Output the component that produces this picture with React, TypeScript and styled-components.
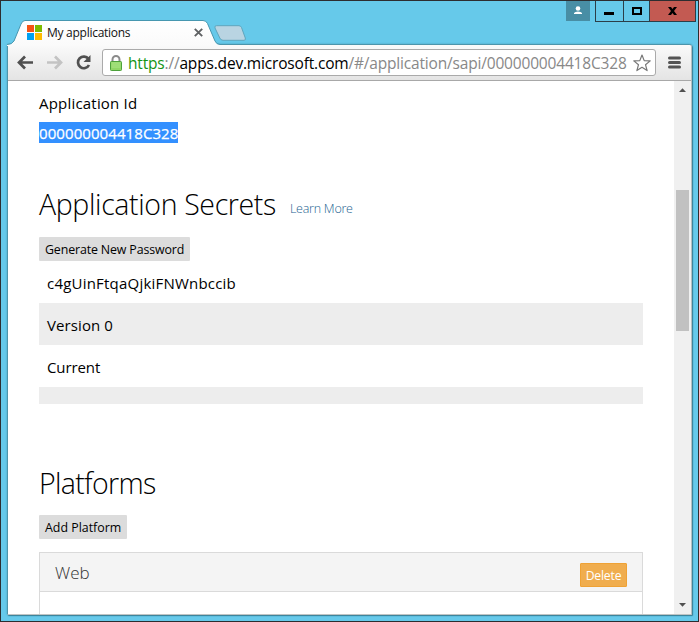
import React from "react";
import styled, { createGlobalStyle } from "styled-components";

const GlobalStyle = createGlobalStyle`
  * { box-sizing: border-box; }
  html, body { margin: 0; padding: 0; overflow: hidden; }
  body { font-family: "Open Sans", "Noto Sans", sans-serif; color: #000; }
  button { font-family: inherit; margin: 0; }
`;

const DesktopWindow = styled.div`
  width: 699px;
  height: 622px;
  display: flex;
  flex-direction: column;
  background: #66c9ea;
  border: 1px solid #2d2d30;
  padding: 0 6px 6px;
  overflow: hidden;
`;

const TitleBar = styled.header`
  height: 43px;
  flex: none;
  display: flex;
  align-items: flex-start;
  justify-content: space-between;
`;

const TabStrip = styled.div`
  display: flex;
  align-items: flex-start;
  padding-top: 19px;
`;

const Tab = styled.div`
  position: relative;
  width: 211px;
  height: 26px;
  display: flex;
  align-items: center;
  padding: 0 15px 1px 20px;
  z-index: 1;
`;

const TabShape = styled.svg`
  position: absolute;
  left: 0;
  top: 0;
  z-index: -1;
`;

const TabTitle = styled.span`
  flex: 1;
  margin-left: 5px;
  font-size: 12px;
  line-height: 16px;
  letter-spacing: -0.27px;
  color: #111;
  white-space: nowrap;
`;

const NewTab = styled.svg`
  margin-top: 5px;
  margin-left: -5px;
`;

const Controls = styled.div`
  display: flex;
`;

const UserBadge = styled.div`
  width: 24px;
  height: 20px;
  background: #488ea5;
  margin-right: 5px;
  display: flex;
  justify-content: center;
`;

const ControlGroup = styled.div`
  display: flex;
  height: 21px;
  margin-right: -4px;
  border: 1px solid #2b3e48;
  border-top: 0;
`;

const ControlButton = styled.div<{ $width: number; $close?: boolean }>`
  width: ${(p) => p.$width}px;
  background: ${(p) => (p.$close ? "#c35a52" : "#66c9ea")};
  & + & { border-left: 1px solid #2b3e48; }
`;

const Browser = styled.main`
  flex: 1;
  min-height: 0;
  display: flex;
  flex-direction: column;
  background: #fff;
  border: 1px solid #4d95ab;
  border-right-color: #b5bfc1;
  border-bottom-color: #bfc4c4;
  border-radius: 3px 3px 1px 1px;
  box-shadow: 1px 1px 1px #397f95, 0 0 2px #4798b2;
`;

const Toolbar = styled.div`
  height: 36px;
  flex: none;
  display: flex;
  align-items: center;
  border-bottom: 1px solid #a8a8a8;
  background: linear-gradient(#fafafa, #e4e4e4);
  border-radius: 2px 2px 0 0;
`;

const NavIcons = styled.svg`
  margin-left: 8px;
  flex: none;
`;

const AddressBar = styled.div`
  width: 554px;
  height: 27px;
  margin-left: 1px;
  display: flex;
  align-items: center;
  background: #fff;
  border: 1px solid #aaa;
  border-radius: 3px;
  padding: 0 4px 0 7px;
`;

const Url = styled.span`
  flex: 1;
  margin-left: 5px;
  font-size: 15.5px;
  line-height: 24px;
  letter-spacing: -0.18px;
  color: #888;
  white-space: nowrap;
`;
const Scheme = styled.span` color: #149414; `;
const Host = styled.span` color: #000; `;

const MenuIcon = styled.svg`
  margin-left: 12px;
`;

const Viewport = styled.div`
  flex: 1;
  min-height: 0;
  display: flex;
  overflow: hidden;
`;

const Page = styled.div`
  flex: 1;
  padding: 11px 31px 0;
  overflow: hidden;
`;

const FieldLabel = styled.div`
  height: 30px;
  font-size: 15px;
  line-height: 22px;
  letter-spacing: 0.2px;
`;

const AppId = styled.div`
  width: 139px;
  height: 21px;
  background: #3390ff;
  color: #fff;
  font-size: 15px;
  line-height: 22px;
  letter-spacing: 0.08px;
  -webkit-text-stroke: 0.25px #fff;
  white-space: nowrap;
`;

const SectionHead = styled.div<{ $top: number; $height: number }>`
  display: flex;
  align-items: flex-start;
  margin-top: ${(p) => p.$top}px;
  height: ${(p) => p.$height}px;
`;

const Heading = styled.h2<{ $spacing: number }>`
  margin: 0;
  font-size: 28.5px;
  line-height: 38px;
  font-weight: 300;
  letter-spacing: ${(p) => p.$spacing}px;
  white-space: nowrap;
`;

const LearnMore = styled.a`
  margin-left: 14px;
  margin-top: 15px;
  font-size: 12.5px;
  line-height: 18px;
  font-weight: 300;
  letter-spacing: -0.25px;
  color: #245f91;
  white-space: nowrap;
`;

const ActionButton = styled.button<{ $width: number; $spacing?: number }>`
  display: block;
  width: ${(p) => p.$width}px;
  height: 24px;
  margin-top: 10px;
  padding: 1px 0 0 6px;
  text-align: left;
  border: 0;
  border-radius: 1px;
  background: #dcdcdc;
  color: #000;
  font-size: 12.4px;
  line-height: 24px;
  letter-spacing: ${(p) => p.$spacing ?? 0}px;
  white-space: nowrap;
`;

const SecretRow = styled.div<{ $shaded?: boolean; $height?: number; $spacing?: number }>`
  height: ${(p) => p.$height ?? 42}px;
  padding-left: 8px;
  background: ${(p) => (p.$shaded ? "#ededed" : "#fff")};
  font-size: 15px;
  line-height: 45px;
  letter-spacing: ${(p) => p.$spacing ?? 0}px;
`;

const PlatformCard = styled.section`
  margin-top: 13px;
  height: 90px;
  border: 1px solid #dadada;
`;

const PlatformHead = styled.div`
  height: 39px;
  display: flex;
  align-items: center;
  justify-content: space-between;
  padding: 5px 15px 0;
  background: #f4f4f4;
  border-bottom: 1px solid #dadada;
`;

const PlatformName = styled.span`
  margin-top: -5px;
  font-size: 17px;
  font-weight: 300;
  color: #333;
`;

const DeleteButton = styled.button`
  width: 47px;
  height: 24px;
  padding: 0;
  border: 1px solid #efa235;
  border-radius: 1px;
  background: #f0ad4e;
  color: #fff;
  font-size: 12.2px;
  line-height: 23px;
  letter-spacing: -0.2px;
`;

const ScrollTrack = styled.div`
  width: 17px;
  flex: none;
  display: flex;
  flex-direction: column;
  align-items: center;
  background: #f0f0f0;
`;

const ScrollThumb = styled.div`
  width: 13px;
  height: 141px;
  margin: 92px 2px auto;
  background: #c1c1c1;
`;

export default function App() {
  return (
    <>
      <GlobalStyle />
      <DesktopWindow>
        <TitleBar>
          <TabStrip>
            <Tab>
              <TabShape width="214" height="26" viewBox="0 0 214 26">
                <defs>
                  <linearGradient id="tab" x1="0" y1="0" x2="0" y2="1">
                    <stop offset="0" stopColor="#fff" />
                    <stop offset="1" stopColor="#fafafa" />
                  </linearGradient>
                </defs>
                <path
                  d="M0 26V24.5Q5 24.500 7 21L14 4Q15.500.5 18 .5H196Q199 .5 200.500 3.500L208 21Q209.500 24.500 213 24.500V26Z"
                  fill="url(#tab)"
                />
                <path
                  d="M0 24.500Q5 24.500 7 21L14 4Q15.500.5 18 .5H196Q199 .5 200.500 3.500L208 21Q209.500 24.500 213 24.500"
                  fill="none"
                  stroke="#4797b0"
                />
              </TabShape>
              <svg width="15" height="15" viewBox="0 0 15 15">
                <path fill="#f65314" d="M0 0h7v7H0z" />
                <path fill="#7cbb00" d="M8 0h7v7H8z" />
                <path fill="#00a1f1" d="M0 8h7v7H0z" />
                <path fill="#ffbb00" d="M8 8h7v7H8z" />
              </svg>
              <TabTitle>My applications</TabTitle>
              <svg width="9" height="9" viewBox="0 0 9 9">
                <path d="M.8.8l7.400 7.400M8.200.8L.8 8.200" stroke="#5f6163" strokeWidth="1.900" />
              </svg>
            </Tab>
            <NewTab width="34" height="17" viewBox="0 0 34 17">
              <path
                d="M3.500.7H26Q27.700.7 28.500 2.500L32.300 13Q33 15.300 31 15.300H10Q7.700 15.300 6.800 13L2 3Q1.200.7 3.500.7Z"
                fill="#b9d4e2"
                stroke="#5fa5bd"
              />
            </NewTab>
          </TabStrip>
          <Controls>
            <UserBadge>
              <svg width="24" height="20" viewBox="0 0 24 20">
                <circle cx="12" cy="7.500" r="2.300" fill="#fff" />
                <path d="M8 13v-1q1-1.500 4-1.500t4 1.500v1z" fill="#fff" />
              </svg>
            </UserBadge>
            <ControlGroup>
              <ControlButton $width={27}>
                <svg width="27" height="20" viewBox="0 0 27 20">
                  <path d="M8 11h10v3H8z" />
                </svg>
              </ControlButton>
              <ControlButton $width={26}>
                <svg width="25" height="20" viewBox="0 0 25 20">
                  <path d="M9 7h8v6H9z" fill="none" stroke="#000" strokeWidth="2" />
                </svg>
              </ControlButton>
              <ControlButton $width={46} $close>
                <svg width="45" height="20" viewBox="0 0 45 20">
                  <path d="M18 6h3l1.500 2L24 6h3l-3 4 3 4h-3l-1.500-2L21 14h-3l3-4z" />
                </svg>
              </ControlButton>
            </ControlGroup>
          </Controls>
        </TitleBar>
        <Browser>
          <Toolbar>
            <NavIcons width="85" height="24" viewBox="0 0 85 24">
              <g fill="none" strokeWidth="2.700">
                <path d="M17 11.500H3.500M9 5.500l-6 6 6 6" stroke="#505050" />
                <path d="M31 11.500h13.500M39 5.500l6 6-6 6" stroke="#c3c3c3" />
                <path d="M72.500 8A5.800 5.800 0 1 0 73 14" stroke="#505050" />
              </g>
              <path d="M74.500 4v7h-7z" fill="#505050" />
            </NavIcons>
            <AddressBar>
              <svg width="13" height="16" viewBox="0 0 13 16">
                <path d="M2.500 8V4.500a3.500 3.500 0 0 1 7 0V8" fill="none" stroke="#8b8b8b" strokeWidth="2" />
                <rect x=".5" y="6.500" width="11" height="9" rx=".8" fill="#91d766" stroke="#4da13b" />
                <path d="M1.500 8h9M1.500 10h9M1.500 12h9" stroke="#b9ed99" strokeWidth=".7" />
              </svg>
              <Url>
                <Scheme>https</Scheme>://<Host>apps.dev.microsoft.com</Host>/#/application/sapi/000000004418C328
              </Url>
              <svg width="18" height="18" viewBox="0 0 18 18">
                <path
                  d="M9 1l2.200 5.600 6 .3-4.700 3.800 1.600 5.900L9 13.300l-5.100 3.300 1.600-5.900L.8 6.900l6-.3z"
                  fill="#fff"
                  stroke="#777"
                  strokeWidth="1.200"
                  strokeLinejoin="round"
                />
              </svg>
            </AddressBar>
            <MenuIcon width="13" height="14" viewBox="0 0 13 14">
              <path d="M1.500 2h10M1.500 6.500h10M1.500 11h10" stroke="#535353" strokeWidth="3" strokeLinecap="round" />
            </MenuIcon>
          </Toolbar>
          <Viewport>
            <Page>
              <FieldLabel>Application Id</FieldLabel>
              <AppId>000000004418C328</AppId>
              <SectionHead $top={42} $height={42}>
                <Heading $spacing={-0.36}>Application Secrets</Heading>
                <LearnMore>Learn More</LearnMore>
              </SectionHead>
              <ActionButton $width={151} $spacing={-0.14}>Generate New Password</ActionButton>
              <SecretRow $spacing={0.21}>c4gUinFtqaQjkiFNWnbccib</SecretRow>
              <SecretRow $shaded $spacing={0.1}>Version 0</SecretRow>
              <SecretRow $spacing={-0.1}>Current</SecretRow>
              <SecretRow $shaded $height={17} />
              <SectionHead $top={60} $height={41}>
                <Heading $spacing={-0.66}>Platforms</Heading>
              </SectionHead>
              <ActionButton $width={88}>Add Platform</ActionButton>
              <PlatformCard>
                <PlatformHead>
                  <PlatformName>Web</PlatformName>
                  <DeleteButton>Delete</DeleteButton>
                </PlatformHead>
              </PlatformCard>
            </Page>
            <ScrollTrack>
              <svg width="17" height="17" viewBox="0 0 17 17">
                <path d="M5 11h7L8.500 7.200z" fill="#505050" />
              </svg>
              <ScrollThumb />
              <svg width="17" height="17" viewBox="0 0 17 17">
                <path d="M5 6h7L8.500 9.800z" fill="#505050" />
              </svg>
            </ScrollTrack>
          </Viewport>
        </Browser>
      </DesktopWindow>
    </>
  );
}
